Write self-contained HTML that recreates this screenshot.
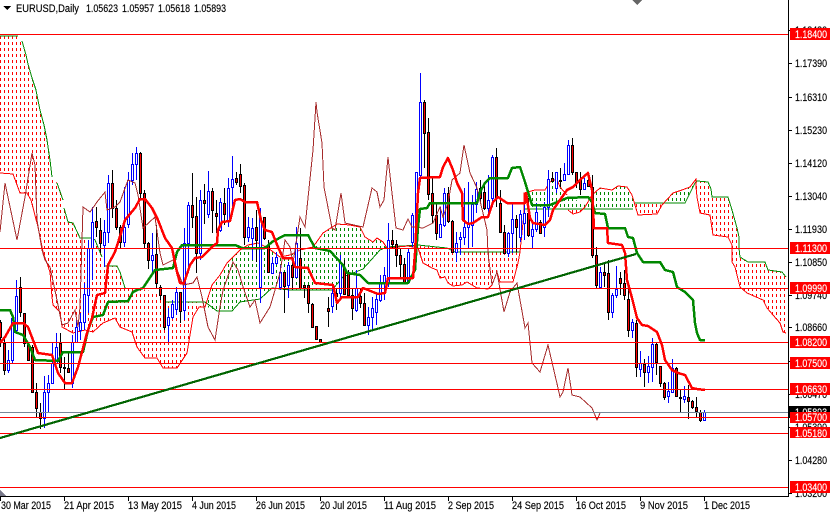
<!DOCTYPE html>
<html><head><meta charset="utf-8"><style>
html,body{margin:0;padding:0;background:#fff;width:830px;height:512px;overflow:hidden}
svg{display:block}
text{font-family:"Liberation Sans",sans-serif;font-size:11px;fill:#000;stroke:#000;stroke-width:.15}
text.l{fill:#fff;stroke:#fff}
.k{fill:none;shape-rendering:crispEdges}
.t{fill:none;shape-rendering:crispEdges;stroke-width:2.5;stroke-linejoin:round}
</style></head><body>
<svg width="830" height="512" viewBox="0 0 830 512" xmlns="http://www.w3.org/2000/svg">
<defs>
<pattern id="hr" width="4" height="6" patternUnits="userSpaceOnUse"><rect x="0" y="0" width="1" height="3" fill="#f00"/></pattern>
<pattern id="hg" width="4" height="6" patternUnits="userSpaceOnUse"><rect x="0" y="0" width="1" height="3" fill="#080"/></pattern>
</defs>
<g shape-rendering="crispEdges">
<!-- clouds -->
<path fill="url(#hr)" d="M0 36L18 36 22 41 26 55 28 64 32 78 36 90 40 110 44 125 47 140 50 160 52 177 57 183 63 200 64 208 68 222 73 223 80 238 92 238 95 240 102 257 105 266 117 266 120 272 125 288 143 289 157 293 163 302 199 302 205 307 199 307 193 317 187 353 177 368 163 368 157 358 145 358 137 347 132 332 120 327 115 318 103 323 93 332 85 330 73 333 62 327 60 312 53 305 52 297 50 272 43 252 38 227 31 200 27 193 20 193 13 174 0 173Z"/>
<path fill="url(#hg)" d="M205 307L212 285 220 275 227 263 233 257 240 250 248 245 258 243 268 248 280 257 290 255 300 250 313 247 323 233 337 224 350 225 360 227 365 237 373 242 377 238 383 242 387 248 408 246 418 246 408 245 387 247 380 250 363 269 343 277 332 290 290 290 272 288 260 299 240 302 232 311 217 311 207 307Z"/>
<path fill="url(#hr)" d="M418 246L437 247 447 248 455 252 482 252 520 252 518 263 513 282 500 282 497 272 492 285 488 289 477 288 467 282 462 285 453 286 448 283 445 277 440 278 437 270 432 268 423 263Z"/>
<path fill="url(#hg)" d="M524 193L535 190 545 190 550 182 557 179 560 187 567 195 585 205 592 195 600 188 612 190 618 186 627 187 632 195 635 205 633 209 524 209Z"/>
<path fill="url(#hr)" d="M568 210L585 207 580 212 573 214Z"/>
<path fill="url(#hr)" d="M635 203L657 203 662 205 657 214 638 215Z"/>
<path fill="url(#hg)" d="M663 203L673 193 682 190 690 187 696 179 695 183 685 203Z"/>
<path fill="url(#hr)" d="M697 181L708 182 711 189 712 197 728 197 732 210 737 228 739 237 739 248 740 257 748 262 765 262 768 270 782 272 786 277 786 333 783 332 780 323 773 315 767 308 763 300 747 293 740 287 735 267 732 262 732 245 728 237 713 235 710 215 700 213 697 197 696 187Z"/>
<!-- thin cloud edges -->
<g class="k" stroke="#080">
<path d="M0 36L18 36M22 41L26 55 28 64 32 78 36 90 40 110 44 125 47 140 50 160 52 177M57 183L63 200M64 208L68 222 73 223 80 238 92 238 95 240 102 257M105 266L117 266 120 272 125 288M163 302L205 302 217 311 232 311 240 302 260 299 272 288 290 290 332 290 343 277 363 269 380 250 387 247 418 245 437 247 447 248 455 252 482 252 520 252M524 209L633 209M635 203L685 203 695 183 697 181 708 182 711 189 712 197 728 197 732 210 737 228 739 237 739 248 740 257 748 262 765 262 768 270 782 272 786 277"/>
</g>
<g class="k" stroke="#f00">
<path d="M0 173L13 174 20 193 27 193 31 200 38 227 43 252 50 272 52 297 53 305 60 312 62 327 73 333 85 330 93 332 103 323 115 318 120 327 132 332 137 347 145 358 157 358 163 368 177 368 187 353 193 317 199 307 205 307 212 285 220 275 227 263 233 257 240 250 248 245 258 243 268 248 280 257 290 255 300 250 313 247 323 233 337 224 350 225 360 227 365 237 373 242 377 238 383 242 387 248 408 246 418 248 423 263 432 268 437 270 440 278 445 277 448 283 453 286 462 285 467 282 477 288 488 289 492 285 497 272 500 282 513 282 518 263 520 252 524 213 524 193 535 190 545 190 550 182 557 179 560 187 567 195M568 210L573 214 580 212 585 207 592 195 600 188 612 190 618 186 627 187 632 195 635 205 638 215 657 214 662 205 673 193 682 190 690 187 696 179 696 187 697 197 700 213 710 215 713 235 728 237 732 245 732 262 735 267 740 287 747 293 763 300 767 308 773 315 780 323 783 332 786 333"/>
</g>
<!-- blue wicks -->
<path class="k" stroke="#00f" d="M8.5 350V373M12.5 317V363M16.5 280V333M44.5 376V428M48.5 375V412M52.5 343V384M56.5 333V364M72.5 335V388M76.5 317V343M80.5 313V340M84.5 283V330M88.5 240V313M92.5 207V280M104.5 220V267M108.5 175V243M124.5 187V247M128.5 172V228M132.5 153V185M136.5 147V180M152.5 233V273M168.5 308V342M172.5 300V319M176.5 287V315M184.5 228V320M188.5 202V273M200.5 190V260M208.5 171V218M220.5 198V232M228.5 178V227M232.5 156V210M248.5 217V242M252.5 218V260M260.5 208V303M272.5 257V273M276.5 252V265M280.5 265V290M288.5 262V298M296.5 227V278M332.5 285V313M340.5 255V300M356.5 270V312M368.5 307V335M372.5 297V330M376.5 292V325M380.5 275V302M384.5 267V300M388.5 223V287M408.5 248V283M412.5 213V247M416.5 172V250M420.5 73V180M440.5 207V238M444.5 188V227M456.5 232V262M460.5 232V255M464.5 188V245M468.5 182V248M472.5 195V247M476.5 182V213M488.5 175V215M492.5 155V207M508.5 232V257M512.5 203V253M520.5 210V242M524.5 205V240M532.5 223V248M536.5 203V232M544.5 202V237M548.5 170V217M556.5 172V193M564.5 163V180M568.5 140V175M584.5 178V190M600.5 267V288M612.5 293V318M616.5 266V298M632.5 319V338M640.5 351V377M648.5 356V383M652.5 338V382M668.5 382V403M672.5 359V393M684.5 386V403M704.5 410V421"/>
<!-- blue bodies -->
<path stroke="#00f" fill="#fff" d="M7.5 360.5h2v10h-2zM11.5 318.5h2v42h-2zM15.5 296.5h2v34h-2zM43.5 392.5h2v26h-2zM47.5 383.5h2v9h-2zM51.5 363.5h2v20h-2zM55.5 347.5h2v16h-2zM71.5 342.5h2v41h-2zM75.5 327.5h2v15h-2zM79.5 322.5h2v8h-2zM83.5 294.5h2v28h-2zM87.5 248.5h2v47h-2zM91.5 222.5h2v26h-2zM103.5 232.5h2v13h-2zM107.5 183.5h2v49h-2zM123.5 227.5h2v15h-2zM127.5 180.5h2v44h-2zM131.5 164.5h2v16h-2zM135.5 153.5h2v11h-2zM151.5 255.5h2v5h-2zM167.5 317.5h2v8h-2zM171.5 304.5h2v13h-2zM175.5 292.5h2v17h-2zM183.5 243.5h2v67h-2zM187.5 205.5h2v38h-2zM199.5 200.5h2v53h-2zM207.5 191.5h2v23h-2zM219.5 202.5h2v28h-2zM227.5 188.5h2v33h-2zM231.5 179.5h2v8h-2zM247.5 227.5h2v10h-2zM251.5 228.5h2v10h-2zM259.5 218.5h2v69h-2zM271.5 263.5h2v10h-2zM275.5 257.5h2v6h-2zM279.5 272.5h2v15h-2zM287.5 265.5h2v20h-2zM295.5 243.5h2v34h-2zM331.5 293.5h2v13h-2zM339.5 262.5h2v31h-2zM355.5 288.5h2v22h-2zM367.5 317.5h2v8h-2zM371.5 308.5h2v9h-2zM375.5 299.5h2v13h-2zM379.5 282.5h2v18h-2zM383.5 275.5h2v8h-2zM387.5 240.5h2v42h-2zM407.5 252.5h2v30h-2zM411.5 215.5h2v27h-2zM415.5 172.5h2v68h-2zM419.5 102.5h2v73h-2zM439.5 224.5h2v13h-2zM443.5 193.5h2v32h-2zM455.5 243.5h2v9h-2zM459.5 237.5h2v2h-2zM463.5 227.5h2v10h-2zM467.5 224.5h2v3h-2zM471.5 204.5h2v21h-2zM475.5 189.5h2v15h-2zM487.5 200.5h2v8h-2zM491.5 157.5h2v41h-2zM507.5 233.5h2v20h-2zM511.5 219.5h2v14h-2zM519.5 214.5h2v23h-2zM523.5 213.5h2v10h-2zM531.5 229.5h2v7h-2zM535.5 212.5h2v17h-2zM543.5 207.5h2v20h-2zM547.5 179.5h2v28h-2zM555.5 172.5h2v16h-2zM563.5 174.5h2v6h-2zM567.5 145.5h2v29h-2zM583.5 183.5h2v6h-2zM599.5 272.5h2v15h-2zM611.5 295.5h2v17h-2zM615.5 289.5h2v6h-2zM631.5 322.5h2v8h-2zM639.5 363.5h2v6h-2zM647.5 366.5h2v6h-2zM651.5 344.5h2v23h-2zM667.5 391.5h2v5h-2zM671.5 368.5h2v24h-2zM683.5 396.5h2v3h-2zM703.5 412.5h2v8h-2z"/>
<!-- black wicks -->
<path class="k" stroke="#000" d="M.5 320V347M4.5 337V375M20.5 277V317M24.5 313V347M28.5 342V360M32.5 345V392M36.5 383V418M40.5 403V429M60.5 333V373M64.5 357V390M68.5 353V373M96.5 207V237M100.5 218V253M112.5 170V218M116.5 200V230M120.5 225V248M140.5 152V200M144.5 190V248M148.5 242V269M156.5 225V288M160.5 285V300M164.5 295V330M180.5 292V323M192.5 173V228M196.5 197V273M204.5 184V224M212.5 188V233M216.5 200V233M224.5 188V225M236.5 172V185M240.5 164V193M244.5 183V245M256.5 210V262M264.5 217V240M268.5 240V273M284.5 272V313M292.5 257V290M300.5 228V288M304.5 285V298M308.5 285V313M312.5 303V328M316.5 326V339M320.5 339V343M328.5 297V327M336.5 288V310M344.5 260V295M348.5 270V295M352.5 288V320M360.5 288V308M364.5 293V325M392.5 230V248M396.5 240V267M400.5 248V277M404.5 258V283M424.5 100V168M428.5 118V200M432.5 178V223M436.5 203V240M448.5 187V223M452.5 220V253M480.5 180V202M484.5 185V210M496.5 148V207M500.5 190V232M504.5 225V253M516.5 215V252M528.5 198V237M540.5 220V234M552.5 172V181M560.5 168V187M572.5 138V175M576.5 172V188M580.5 172V195M588.5 173V187M592.5 175V258M596.5 247V289M604.5 263V287M608.5 260V320M620.5 272V295M624.5 270V300M628.5 288V337M636.5 320V377M644.5 359V387M656.5 342V375M660.5 366V387M664.5 382V400M676.5 367V397M680.5 390V412M688.5 385V419M692.5 400V409M696.5 397V418M700.5 410V422"/>
<!-- red bodies -->
<path stroke="#000" fill="#f00" d="M-.5 322.5h2v15h-2zM3.5 343.5h2v27h-2zM19.5 287.5h2v25h-2zM23.5 313.5h2v30h-2zM27.5 344.5h2v16h-2zM31.5 347.5h2v45h-2zM35.5 392.5h2v16h-2zM39.5 412.5h2v6h-2zM59.5 343.5h2v24h-2zM63.5 367.5h2v1h-2zM67.5 368.5h2v4h-2zM95.5 221.5h2v6h-2zM99.5 230.5h2v13h-2zM111.5 183.5h2v25h-2zM115.5 208.5h2v19h-2zM119.5 227.5h2v15h-2zM139.5 153.5h2v40h-2zM143.5 193.5h2v50h-2zM147.5 243.5h2v17h-2zM155.5 254.5h2v29h-2zM159.5 287.5h2v8h-2zM163.5 295.5h2v32h-2zM179.5 292.5h2v19h-2zM191.5 205.5h2v12h-2zM195.5 216.5h2v37h-2zM203.5 200.5h2v3h-2zM211.5 191.5h2v19h-2zM215.5 213.5h2v3h-2zM223.5 203.5h2v11h-2zM235.5 178.5h2v4h-2zM239.5 174.5h2v12h-2zM243.5 185.5h2v52h-2zM255.5 227.5h2v13h-2zM263.5 217.5h2v21h-2zM267.5 245.5h2v27h-2zM283.5 272.5h2v14h-2zM291.5 265.5h2v12h-2zM299.5 258.5h2v30h-2zM303.5 285.5h2v2h-2zM307.5 285.5h2v18h-2zM311.5 304.5h2v23h-2zM315.5 326.5h2v13h-2zM319.5 339.5h2v3h-2zM327.5 308.5h2v3h-2zM335.5 293.5h2v3h-2zM343.5 268.5h2v26h-2zM347.5 272.5h2v23h-2zM351.5 295.5h2v13h-2zM359.5 296.5h2v7h-2zM363.5 303.5h2v22h-2zM391.5 240.5h2v4h-2zM395.5 244.5h2v11h-2zM399.5 255.5h2v9h-2zM403.5 264.5h2v18h-2zM423.5 102.5h2v31h-2zM427.5 132.5h2v62h-2zM431.5 193.5h2v22h-2zM435.5 215.5h2v18h-2zM447.5 193.5h2v28h-2zM451.5 221.5h2v31h-2zM479.5 188.5h2v10h-2zM483.5 192.5h2v16h-2zM495.5 157.5h2v41h-2zM499.5 203.5h2v29h-2zM503.5 232.5h2v21h-2zM515.5 219.5h2v8h-2zM527.5 213.5h2v22h-2zM539.5 222.5h2v11h-2zM551.5 178.5h2v3h-2zM559.5 180.5h2v1h-2zM571.5 145.5h2v27h-2zM575.5 172.5h2v10h-2zM579.5 180.5h2v9h-2zM587.5 180.5h2v6h-2zM591.5 187.5h2v68h-2zM595.5 255.5h2v30h-2zM603.5 272.5h2v3h-2zM607.5 273.5h2v39h-2zM619.5 278.5h2v5h-2zM623.5 283.5h2v12h-2zM627.5 299.5h2v31h-2zM635.5 323.5h2v44h-2zM643.5 364.5h2v8h-2zM655.5 344.5h2v18h-2zM659.5 366.5h2v17h-2zM663.5 383.5h2v14h-2zM675.5 368.5h2v28h-2zM679.5 397.5h2v1h-2zM687.5 397.5h2v4h-2zM691.5 401.5h2v6h-2zM695.5 407.5h2v4h-2zM699.5 412.5h2v8h-2z"/>
<!-- chikou -->
<path class="k" stroke="#a52a2a" d="M0 232L5 183 17 240 25 197 32 153 35 165 37 220 42 250 45 260 50 267 57 300 62 325 68 323 75 310 78 327 80 307 83 207 90 212 97 202 105 192 107 210 115 207 120 202 128 180 135 183 138 195 143 228 155 217 160 253 163 265 173 260 180 277 183 285 193 283 197 277 202 297 208 327 215 340 220 307 223 290 233 262 238 270 243 287 250 307 255 300 260 323 270 307 280 273 285 240 290 247 293 263 300 217 305 227 313 150 316 102 317 112 322 143 324 187 332 228 335 230 341 193 345 223 363 227 372 188 377 192 380 207 384 200 388 157 392 193 396 228 403 230 408 219 412 227 423 228 433 223 440 207 443 217 448 203 452 180 460 173 464 145 470 173 477 188 487 230 488 253 492 285 497 272 504 312 510 292 517 283 525 328 528 323 532 363 540 372 548 345 558 388 560 397 563 392 568 368 572 395 580 397 592 408 597 420 600 413"/>
<!-- kijun -->
<path class="t" stroke="#080" d="M0 310L10 310 13 317 15 332 23 335 30 347 35 360 58 361 63 352 83 352 88 330 93 317 103 315 108 302 128 301 133 292 137 290 143 288 155 270 173 268 177 252 182 245 235 245 242 248 265 248 272 242 285 235 308 235 315 248 330 251 343 265 347 273 360 275 368 283 408 283 415 270 418 227 420 209 427 208 430 203 477 203 480 192 485 183 490 178 508 178 512 168 520 167 525 182 532 205 550 205 567 198 588 197 592 202 595 213 605 214 608 228 625 228 628 237 633 238 637 253 643 262 660 262 665 270 673 272 677 287 685 292 693 300 695 323 697 333 700 340 705 340"/>
<!-- tenkan -->
<path class="t" stroke="#f00" d="M0 343L5 337 13 323 23 323 28 327 38 353 52 355 58 373 65 383 72 383 78 367 87 333 92 318 97 295 105 293 108 265 115 252 122 230 125 220 135 208 140 199 145 199 152 208 158 220 165 238 172 248 177 272 180 283 184 283 190 265 195 258 202 257 212 247 217 243 218 230 222 222 230 221 235 200 240 199 245 202 257 202 261 220 265 230 272 232 278 247 283 258 292 258 295 267 308 268 315 283 333 285 337 303 342 297 358 297 363 288 378 294 385 293 388 278 413 278 415 253 418 193 420 178 440 177 443 167 448 158 453 170 457 183 462 193 463 220 468 224 473 223 482 217 488 217 493 202 498 197 507 203 525 203 526 193 530 218 533 223 545 225 550 220 553 210 567 190 573 187 580 180 588 173 592 190 594 228 607 228 608 243 622 245 625 253 627 280 632 298 637 318 642 325 648 326 657 332 662 345 665 360 672 370 678 373 685 375 692 388 697 389 705 390"/>
<!-- horizontal lines -->
<path class="k" stroke="#789" d="M0 412.5H788"/>
<path class="k" stroke="#f00" d="M0 34.5H788M0 248.5H788M0 288.5H788M0 342.5H788M0 363.5H788M0 389.5H788M0 417.5H788M0 433.5H788M0 487.5H788"/>
<!-- trendline -->
<path class="k" stroke="#006400" stroke-width="2.2" d="M0 438L636 254"/>
<!-- axes -->
<path class="k" stroke="#000" d="M788.5 0V496.5H0M789 30.5h3M789 63.5h3M789 97.5h3M789 130.5h3M789 163.5h3M789 196.5h3M789 229.5h3M789 262.5h3M789 295.5h3M789 327.5h3M789 361.5h3M789 394.5h3M789 427.5h3M789 460.5h3M789 493.5h3M.5 497v4M64.5 497v4M128.5 497v4M192.5 497v4M256.5 497v4M320.5 497v4M384.5 497v4M448.5 497v4M512.5 497v4M576.5 497v4M640.5 497v4M704.5 497v4"/>
<path fill="#000" d="M3 6h8l-4 4z"/>
<path fill="#666" d="M632 0h10l-5 5z"/>
<path fill="#778" d="M0 490l6 6H0z"/>
<rect x="789" y="406" width="41" height="12" fill="#000"/>
</g>
<!-- header -->
<text x="16" y="12" textLength="63" lengthAdjust="spacingAndGlyphs">EURUSD,Daily</text>
<text x="86" y="12" textLength="32" lengthAdjust="spacingAndGlyphs">1.05623</text>
<text x="122" y="12" textLength="32" lengthAdjust="spacingAndGlyphs">1.05957</text>
<text x="158" y="12" textLength="32" lengthAdjust="spacingAndGlyphs">1.05618</text>
<text x="194" y="12" textLength="32" lengthAdjust="spacingAndGlyphs">1.05893</text>
<!-- price scale -->
<text x="795" y="34" textLength="32" lengthAdjust="spacingAndGlyphs">1.18480</text>
<text x="795" y="67" textLength="32" lengthAdjust="spacingAndGlyphs">1.17390</text>
<text x="795" y="101" textLength="32" lengthAdjust="spacingAndGlyphs">1.16310</text>
<text x="795" y="134" textLength="32" lengthAdjust="spacingAndGlyphs">1.15230</text>
<text x="795" y="167" textLength="32" lengthAdjust="spacingAndGlyphs">1.14120</text>
<text x="795" y="200" textLength="32" lengthAdjust="spacingAndGlyphs">1.13040</text>
<text x="795" y="233" textLength="32" lengthAdjust="spacingAndGlyphs">1.11930</text>
<text x="795" y="266" textLength="32" lengthAdjust="spacingAndGlyphs">1.10850</text>
<text x="795" y="299" textLength="32" lengthAdjust="spacingAndGlyphs">1.09740</text>
<text x="795" y="331" textLength="32" lengthAdjust="spacingAndGlyphs">1.08660</text>
<text x="795" y="365" textLength="32" lengthAdjust="spacingAndGlyphs">1.07580</text>
<text x="795" y="398" textLength="32" lengthAdjust="spacingAndGlyphs">1.06470</text>
<text x="795" y="431" textLength="32" lengthAdjust="spacingAndGlyphs">1.05390</text>
<text x="795" y="464" textLength="32" lengthAdjust="spacingAndGlyphs">1.04280</text>
<text x="795" y="497" textLength="32" lengthAdjust="spacingAndGlyphs">1.03200</text>
<text class="l" x="795" y="416" textLength="32" lengthAdjust="spacingAndGlyphs">1.05893</text>
<!-- price labels -->
<g fill="#f00" shape-rendering="crispEdges">
<rect x="790" y="28" width="40" height="12"/>
<rect x="790" y="242" width="40" height="12"/>
<rect x="790" y="282" width="40" height="12"/>
<rect x="790" y="336" width="40" height="12"/>
<rect x="790" y="357" width="40" height="12"/>
<rect x="790" y="383" width="40" height="12"/>
<rect x="790" y="412" width="40" height="11"/>
<rect x="790" y="427" width="40" height="11"/>
<rect x="790" y="481" width="40" height="12"/>
</g>
<text class="l" x="795" y="38" textLength="32" lengthAdjust="spacingAndGlyphs">1.18400</text>
<text class="l" x="795" y="252" textLength="32" lengthAdjust="spacingAndGlyphs">1.11300</text>
<text class="l" x="795" y="292" textLength="32" lengthAdjust="spacingAndGlyphs">1.09990</text>
<text class="l" x="795" y="346" textLength="32" lengthAdjust="spacingAndGlyphs">1.08200</text>
<text class="l" x="795" y="367" textLength="32" lengthAdjust="spacingAndGlyphs">1.07500</text>
<text class="l" x="795" y="393" textLength="32" lengthAdjust="spacingAndGlyphs">1.06630</text>
<text class="l" x="795" y="421" textLength="32" lengthAdjust="spacingAndGlyphs">1.05700</text>
<text class="l" x="795" y="437" textLength="32" lengthAdjust="spacingAndGlyphs">1.05180</text>
<text class="l" x="795" y="491" textLength="32" lengthAdjust="spacingAndGlyphs">1.03400</text>
<!-- time scale -->
<text x="1" y="509" textLength="50" lengthAdjust="spacingAndGlyphs">30 Mar 2015</text>
<text x="64" y="509" textLength="50" lengthAdjust="spacingAndGlyphs">21 Apr 2015</text>
<text x="128" y="509" textLength="54" lengthAdjust="spacingAndGlyphs">13 May 2015</text>
<text x="192" y="509" textLength="44" lengthAdjust="spacingAndGlyphs">4 Jun 2015</text>
<text x="256" y="509" textLength="49" lengthAdjust="spacingAndGlyphs">26 Jun 2015</text>
<text x="320" y="509" textLength="47" lengthAdjust="spacingAndGlyphs">20 Jul 2015</text>
<text x="384" y="509" textLength="52" lengthAdjust="spacingAndGlyphs">11 Aug 2015</text>
<text x="448" y="509" textLength="46" lengthAdjust="spacingAndGlyphs">2 Sep 2015</text>
<text x="512" y="509" textLength="52" lengthAdjust="spacingAndGlyphs">24 Sep 2015</text>
<text x="576" y="509" textLength="50" lengthAdjust="spacingAndGlyphs">16 Oct 2015</text>
<text x="640" y="509" textLength="48" lengthAdjust="spacingAndGlyphs">9 Nov 2015</text>
<text x="704" y="509" textLength="46" lengthAdjust="spacingAndGlyphs">1 Dec 2015</text>
</svg>
</body></html>
